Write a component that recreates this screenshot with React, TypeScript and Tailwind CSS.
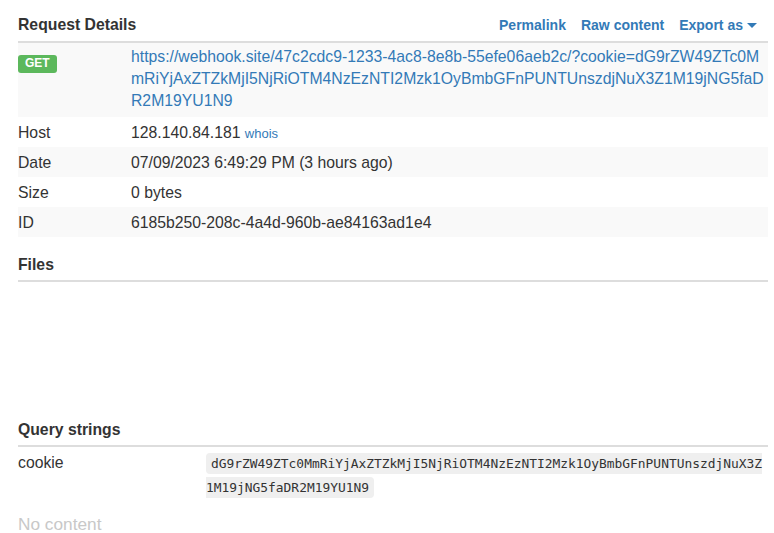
const url = [
  "https://webhook.site/47c2cdc9-1233-4ac8-8e8b-55efe06aeb2c/?cookie=dG9rZW49ZTc0M",
  "mRiYjAxZTZkMjI5NjRiOTM4NzEzNTI2Mzk1OyBmbGFnPUNTUnszdjNuX3Z1M19jNG5faD",
  "R2M19YU1N9",
];

const rows = [
  { label: "Date", value: "07/09/2023 6:49:29 PM (3 hours ago)", striped: true },
  { label: "Size", value: "0 bytes", striped: false },
  { label: "ID", value: "6185b250-208c-4a4d-960b-ae84163ad1e4", striped: true },
];

const App = () => {
  return (
    <div className="min-h-[533px] bg-white font-['Liberation_Sans',Arial,sans-serif] text-[15.75px] text-[#333]">
      <div className="ml-[18px] w-[750px]">
        <div className="flex h-[41px] items-center justify-between pt-[9px]">
          <h3 className="text-[15.75px] font-bold leading-[20px]">Request Details</h3>
          <div className="flex items-center gap-[15px] pr-[11px] text-[14px] font-bold text-[#337ab7]">
            <a>Permalink</a>
            <a>Raw content</a>
            <a className="flex items-center">
              Export as
              <span className="ml-[4px] inline-block h-0 w-0 border-x-[5px] border-t-[5px] border-x-transparent border-t-[#337ab7]" />
            </a>
          </div>
        </div>

        <div className="border-t-2 border-[#ddd]">
          <div className="flex bg-[#f9f9f9] pb-[5px] pt-[3px]">
            <div className="w-[113px] shrink-0 pt-[4px]">
              <span className="inline-block rounded-[3px] bg-[#5cb85c] px-[7px] pb-[3.5px] pt-[2.5px] text-[12px] font-bold leading-[12px] text-white">
                GET
              </span>
            </div>
            <div className="leading-[22px] text-[#337ab7]">
              {url.map((l) => (
                <div key={l}>{l}</div>
              ))}
            </div>
          </div>
          <div className="flex h-[30px] items-center pt-[2px]">
            <div className="w-[113px] shrink-0">Host</div>
            <div>
              128.140.84.181 <span className="text-[13px] text-[#337ab7]">whois</span>
            </div>
          </div>
          {rows.map((r) => (
            <div
              key={r.label}
              className={`flex h-[30px] items-center pt-[2px] ${r.striped ? "bg-[#f9f9f9]" : ""}`}
            >
              <div className="w-[113px] shrink-0">{r.label}</div>
              <div>{r.value}</div>
            </div>
          ))}
        </div>

        <h3 className="border-b-2 border-[#ddd] pb-[5px] pt-[18px] text-[15.75px] font-bold leading-[20px]">
          Files
        </h3>

        <h3 className="mt-[137px] border-b-2 border-[#ddd] pb-[5px] pt-px text-[15.75px] font-bold leading-[20px]">
          Query strings
        </h3>
        <div className="flex pb-[5px] pt-[4px] leading-[23px]">
          <div className="w-[188px] shrink-0">cookie</div>
          <div>
            <code className="box-decoration-slice rounded-[4px] bg-[#efefef] px-[5px] py-[3px] font-['DejaVu_Sans_Mono',monospace] text-[12.9px] text-[#333]">
              dG9rZW49ZTc0MmRiYjAxZTZkMjI5NjRiOTM4NzEzNTI2Mzk1OyBmbGFnPUNTUnszdjNuX3Z
              <br />
              1M19jNG5faDR2M19YU1N9
            </code>
          </div>
        </div>
        <p className="mt-[10px] text-[17.25px] leading-[20px] text-[#c8c8c8]">No content</p>
      </div>
    </div>
  );
};

export default App;
